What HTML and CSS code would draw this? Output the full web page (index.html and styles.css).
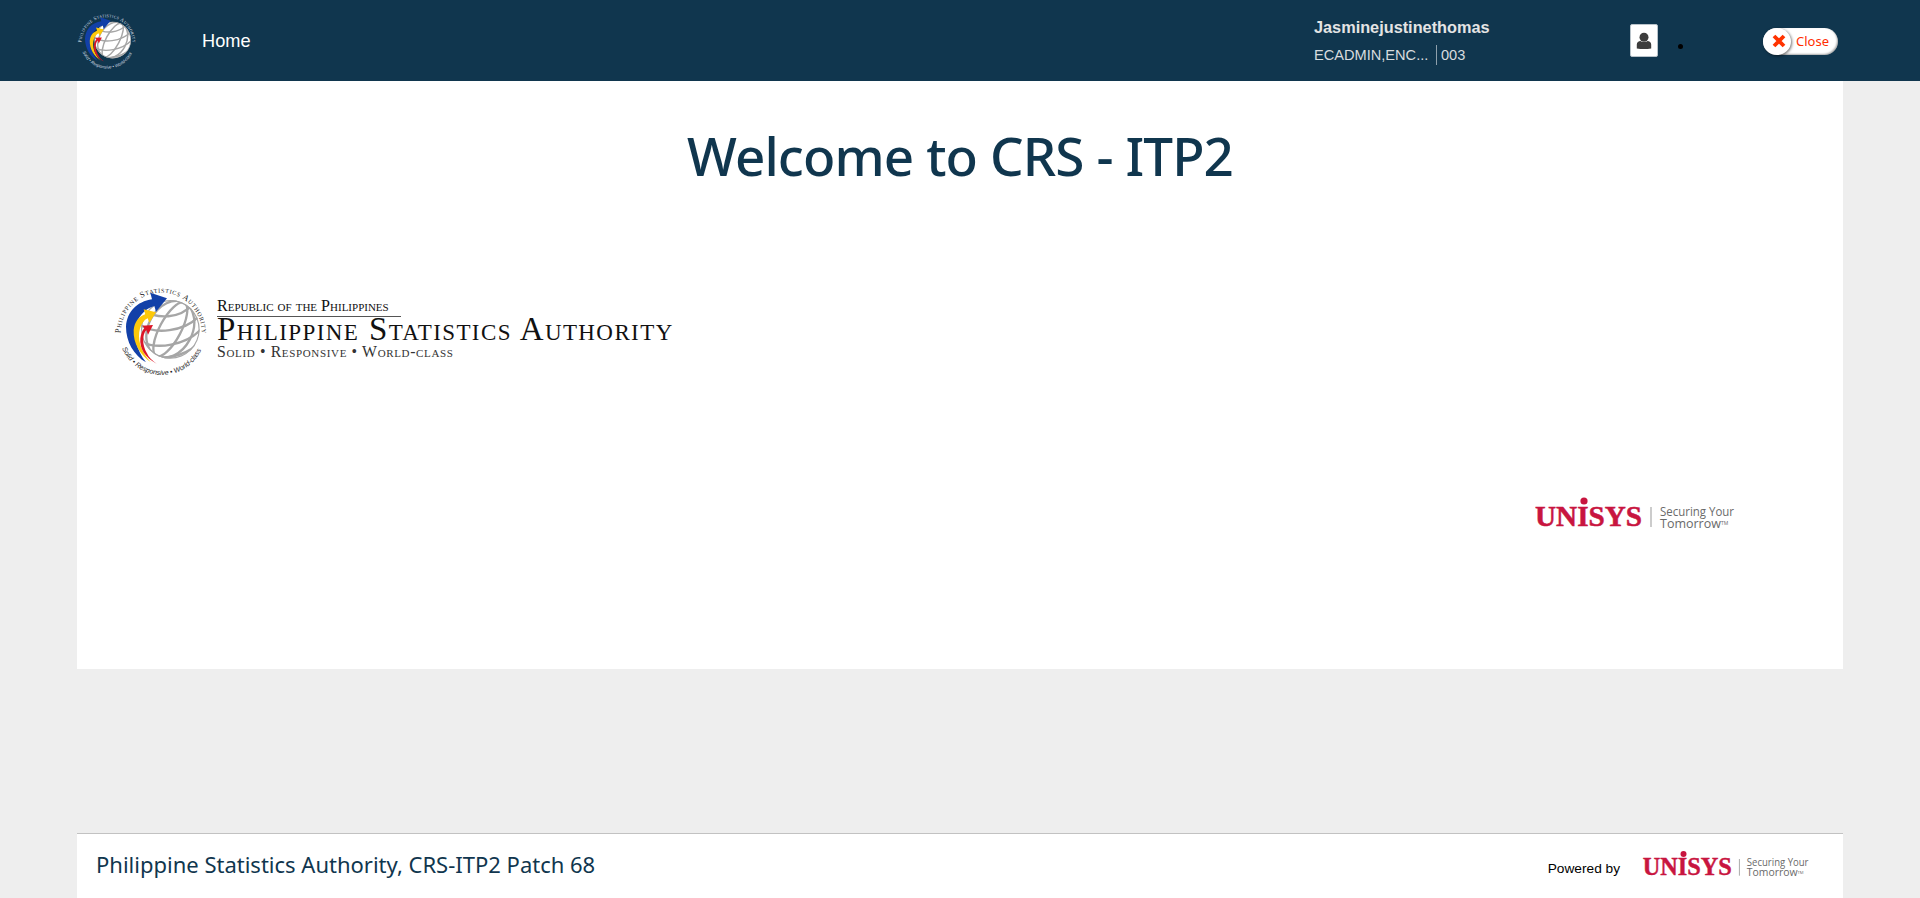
FILE: index.html
```html
<!DOCTYPE html>
<html lang="en">
<head>
    <meta charset="UTF-8">
    <meta name="viewport" content="width=device-width, initial-scale=1.0">
    <title>CRS - ITP2</title>
    <link rel="stylesheet" href="styles.css">
</head>
<body>

    <!-- Shared logos -->
    <svg class="svg-defs" aria-hidden="true">
        <defs>
            <path id="ring-top" d="M66 190 A122 122 0 0 1 310 190"></path>
            <path id="ring-bottom" d="M70 235 A130 130 0 0 0 310 235"></path>
            <clipPath id="globe-clip"><circle cx="215" cy="178" r="88"></circle></clipPath>
        </defs>
        <symbol id="psa-seal" viewBox="10 0 360 360">
            <text class="seal-top"><textPath href="#ring-top" textLength="383">Philippine Statistics Authority</textPath></text>
            <text class="seal-bottom"><textPath href="#ring-bottom" textLength="300">Solid • Responsive • World-class</textPath></text>
            <g class="globe" clip-path="url(#globe-clip)">
                <circle cx="215" cy="178" r="88"></circle>
                <g transform="rotate(28 215 178)">
                    <ellipse cx="215" cy="178" rx="32" ry="90"></ellipse>
                    <ellipse cx="215" cy="178" rx="66" ry="90"></ellipse>
                </g>
                <path d="M135 120 C175 150 245 145 280 105"></path>
                <path d="M125 165 C170 195 255 185 300 140"></path>
                <path d="M130 215 C175 240 260 225 305 180"></path>
                <path d="M150 255 C190 270 250 262 295 225"></path>
            </g>
            <path fill="#1240a8" d="M205 85 L172 125 L167 108 C125 120 100 165 112 215 C118 240 128 258 142 277 C105 255 82 215 82 170 C85 125 115 95 160 88 L155 68 Z"></path>
            <path fill="#fcc80a" d="M172 127 L152 158 L147 145 C125 155 115 190 125 225 C132 245 142 262 157 277 C125 255 103 220 105 180 C108 155 120 140 140 133 L135 118 Z"></path>
            <path fill="#dc1527" d="M163 165 L148 194 L143 180 C130 195 130 225 145 250 C150 262 160 272 174 281 C140 265 122 235 125 205 C127 192 130 182 137 174 L131 167 Z"></path>
        </symbol>
        <symbol id="unisys-logo" viewBox="0 0 200 36">
            <circle class="unisys-dot" cx="49" cy="6" r="3.6"></circle>
            <text class="unisys-name" x="0" y="31" textLength="107" lengthAdjust="spacingAndGlyphs">UNISYS</text>
            <rect class="unisys-sep" x="115.5" y="12" width="1" height="20"></rect>
            <text class="unisys-tag" x="125" y="20.5" textLength="74" lengthAdjust="spacingAndGlyphs">Securing Your</text>
            <text class="unisys-tag" x="125" y="32.5">Tomorrow<tspan class="unisys-tm" dy="-3">TM</tspan></text>
        </symbol>
    </svg>

    <!-- Top bar -->
    <header class="topbar">
        <svg class="topbar-logo"><use href="#psa-seal"></use></svg>
        <a class="home-link" href="#">Home</a>
        <div class="user-info">
            <div class="user-name">Jasminejustinethomas</div>
            <div class="user-role">
                <span class="role-list">ECADMIN,ENC...</span>
                <span class="role-code">003</span>
            </div>
        </div>
        <button class="profile-btn" type="button" aria-label="Profile">
            <svg viewBox="0 0 20 20">
                <circle cx="10" cy="6.3" r="4.5"></circle>
                <path d="M2.8 17.5 V13.5 C2.8 11.3 4.6 10 6.5 10 C8 11.4 12 11.4 13.5 10 C15.4 10 17.2 11.3 17.2 13.5 V17.5 Q10 18.6 2.8 17.5 Z"></path>
            </svg>
        </button>
        <span class="menu-dot"></span>
        <button class="close-btn" type="button">
            <span class="close-knob">
                <svg viewBox="0 0 14 14" width="14" height="14">
                    <path d="M2 2 L12 12 M12 2 L2 12"></path>
                </svg>
            </span>
            <span class="close-text">Close</span>
        </button>
    </header>

    <div class="page">
        <!-- Welcome panel -->
        <main class="panel">
            <h1>Welcome to CRS - ITP2</h1>
            <div class="psa-logo">
                <svg class="psa-seal"><use href="#psa-seal"></use></svg>
                <div class="psa-words">
                    <div class="psa-republic">Republic of the Philippines</div>
                    <div class="psa-name">Philippine Statistics Authority</div>
                    <div class="psa-motto">Solid • Responsive • World-class</div>
                </div>
            </div>
            <div class="panel-brand">
                <svg class="unisys-big"><use href="#unisys-logo"></use></svg>
            </div>
        </main>

        <!-- Footer -->
        <footer class="footer">
            <span class="footer-text">Philippine Statistics Authority, CRS-ITP2 Patch 68</span>
            <div class="footer-brand">
                <span class="powered">Powered by</span>
                <svg class="unisys-small"><use href="#unisys-logo"></use></svg>
            </div>
        </footer>
    </div>

</body>
</html>
```

FILE: styles.css
```css
* {
    box-sizing: border-box;
}

html, body {
    height: 100%;
}

body {
    margin: 0;
    background-color: #eeeeee;
    font-family: "Liberation Sans", Arial, sans-serif;
    display: flex;
    flex-direction: column;
    overflow: hidden;
}

.svg-defs {
    width: 0;
    height: 0;
    position: absolute;
}

/* Top bar */
.topbar {
    height: 81px;
    flex-shrink: 0;
    background: #10364e;
    display: flex;
    align-items: center;
    padding-left: 70px;
}

.topbar-logo {
    width: 75px;
    height: 75px;
    color: #d5dde2;
    align-self: flex-start;
    margin-top: 3px;
}

.home-link {
    margin-left: 57px;
    margin-top: 1px;
    color: white;
    font-size: 18.2px;
    text-decoration: none;
}

.user-info {
    margin-left: auto;
    margin-right: -1px;
    width: 317px;
    color: #e4e4e4;
    align-self: flex-start;
    padding-top: 17px;
}

.user-name {
    font-size: 16.3px;
    font-weight: bold;
    line-height: 20px;
}

.user-role {
    display: flex;
    font-size: 14.6px;
    line-height: 20px;
    margin-top: 8px;
    color: #d8dcdf;
}

.role-list {
    width: 123px;
    border-right: 1px solid #8ea0ac;
}

.role-code {
    padding-left: 4px;
}

.profile-btn {
    width: 28px;
    height: 33px;
    padding: 0;
    border: 1px solid #b9c3ca;
    border-radius: 2px;
    background: white;
    display: flex;
    align-items: center;
    justify-content: center;
}

.profile-btn svg {
    fill: #3c3c3c;
    width: 20px;
    height: 20px;
}

.menu-dot {
    width: 5px;
    height: 5px;
    border-radius: 50%;
    background: black;
    margin-left: 20px;
    margin-top: 12px;
}

.close-btn {
    width: 75px;
    height: 27px;
    margin-left: 80px;
    margin-right: 82px;
    margin-top: 1px;
    padding: 0;
    border: none;
    border-radius: 14px;
    background: white;
    box-shadow: inset -1px -1px 2px rgba(0, 0, 0, 0.35);
    display: flex;
    align-items: center;
    cursor: pointer;
}

.close-knob {
    width: 28px;
    height: 27px;
    padding-left: 3px;
    border-radius: 50%;
    background: white;
    box-shadow: 1px 1px 3px rgba(0, 0, 0, 0.55);
    display: flex;
    align-items: center;
    justify-content: center;
}

.close-knob path {
    stroke: #ff3300;
    stroke-width: 3.8;
    fill: none;
}

.close-text {
    margin-left: 5px;
    font-family: "Noto Sans", sans-serif;
    font-size: 13px;
    color: #ff2d00;
}

/* Page column */
.page {
    flex: 1;
    margin: 0 77px;
    display: flex;
    flex-direction: column;
    justify-content: space-between;
}

.panel {
    height: 588px;
    background: white;
    padding-top: 39px;
}

h1 {
    margin: 0;
    text-align: center;
    color: #10364e;
    font-family: "Noto Sans", sans-serif;
    font-size: 53px;
    font-weight: 500;
    letter-spacing: -0.9px;
    line-height: 72px;
}

.psa-logo {
    display: flex;
    margin-top: 78px;
    margin-left: 25px;
    height: 120px;
}

.psa-seal {
    width: 120px;
    height: 120px;
    color: #222222;
    flex-shrink: 0;
}

.psa-words {
    margin-left: -5px;
    margin-top: 14px;
    font-family: "Liberation Serif", serif;
    font-variant: small-caps;
    color: #111111;
    white-space: nowrap;
}

.psa-republic {
    width: 184px;
    margin-top: 13px;
    font-size: 16.1px;
    line-height: 18px;
    padding-bottom: 1px;
    border-bottom: 1px solid #555555;
}

.psa-name {
    font-size: 33px;
    letter-spacing: 1.4px;
    line-height: 27px;
    margin-top: -1px;
}

.psa-motto {
    font-size: 15.8px;
    line-height: 17px;
    color: #333333;
    letter-spacing: 0.65px;
}

.panel-brand {
    display: flex;
    justify-content: flex-end;
    margin-top: 105px;
    padding-right: 108px;
}

.unisys-big {
    width: 200px;
    height: 36px;
}

.unisys-small {
    width: 168px;
    height: 30px;
    margin-left: 22px;
    margin-top: -4px;
}

.unisys-name {
    font-family: "Liberation Serif", serif;
    font-weight: bold;
    font-size: 29px;
    fill: #c8153f;
    stroke: #c8153f;
    stroke-width: 0.5;
}

.unisys-dot {
    fill: #c8153f;
}

.unisys-sep {
    fill: #9a9a9a;
}

.unisys-tag {
    font-family: "Open Sans", sans-serif;
    font-size: 12.5px;
    fill: #6a6a6a;
}

.unisys-tm {
    font-size: 5px;
}

/* Seal */
.seal-top {
    font-family: "Liberation Serif", serif;
    font-variant: small-caps;
    font-size: 25px;
    fill: currentColor;
}

.seal-bottom {
    font-family: "Liberation Sans", sans-serif;
    font-style: italic;
    font-size: 21px;
    fill: currentColor;
}

.globe circle, .globe ellipse, .globe path {
    fill: none;
    stroke: #a6a6a6;
    stroke-width: 7;
}

.globe > circle {
    fill: white;
}

/* Footer */
.footer {
    height: 65px;
    flex-shrink: 0;
    background: white;
    border-top: 1px solid #c2c2c2;
    display: flex;
    justify-content: space-between;
    align-items: center;
    padding: 0 33px 0 19px;
}

.footer-text {
    color: #10364e;
    font-family: "Noto Sans", sans-serif;
    font-size: 22px;
    margin-top: -5px;
}

.footer-brand {
    display: flex;
    align-items: center;
}

.powered {
    font-size: 13.7px;
    margin-top: 4px;
    color: black;
}
```
